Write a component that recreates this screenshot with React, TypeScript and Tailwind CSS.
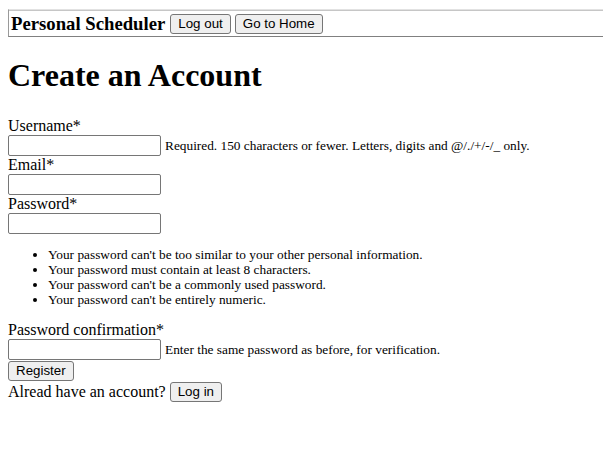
import React from 'react';

const btn =
  "font-['Liberation_Sans',Arial,sans-serif] text-[13.33px] leading-[16px] px-[7px] py-[1px] bg-[#efefef] border border-[#767676] rounded-[3px] text-black";

const input = 'block w-[153px] h-[21px] border border-[#767676] rounded-[2px] bg-white';

const rules = [
  "Your password can't be too similar to your other personal information.",
  'Your password must contain at least 8 characters.',
  "Your password can't be a commonly used password.",
  "Your password can't be entirely numeric.",
];

function Field({ label, type, help }: { label: string; type: string; help?: string }) {
  return (
    <div>
      <label className="block leading-[18px]">{label}</label>
      <div className="flex items-center gap-[4px]">
        <input type={type} className={input} />
        {help && <span className="text-[13.33px] leading-[15px]">{help}</span>}
      </div>
    </div>
  );
}

export default function App() {
  return (
    <div className="w-[603px] h-[465px] overflow-hidden bg-white text-black font-['Liberation_Serif','Times_New_Roman',serif] text-[16px] p-2">
      <div className="w-[620px] mt-[1px] border border-t-[#e2e2e2] border-l-[#9a9a9a] border-r-[#9a9a9a] border-b-[#808080]">
        <div className="flex items-center gap-[4px] h-[26px] px-[2px] border-t border-[#c6c6c6]">
          <strong className="text-[18.72px] leading-[22px] mr-[1px]">Personal Scheduler</strong>
          <button className={btn}>Log out</button>
          <button className={btn}>Go to Home</button>
        </div>
      </div>

      <h1 className="text-[32px] font-bold leading-[37px] mt-[20px] mb-[23px]">Create an Account</h1>

      <form className="flex flex-col">
        <Field label="Username*" type="text" help="Required. 150 characters or fewer. Letters, digits and @/./+/-/_ only." />
        <Field label="Email*" type="email" />
        <Field label="Password*" type="password" />
        <ul className="list-disc pl-[40px] mt-[13px] mb-[14px] text-[13.33px] leading-[15px]">
          {rules.map(r => (
            <li key={r}>{r}</li>
          ))}
        </ul>
        <Field label="Password confirmation*" type="password" help="Enter the same password as before, for verification." />
        <div className="flex mt-[1px]">
          <button type="button" className={btn}>Register</button>
        </div>
        <div className="flex items-center gap-[4px] mt-[1px]">
          <span className="leading-[18px]">Alread have an account?</span>
          <button type="button" className={btn}>Log in</button>
        </div>
      </form>
    </div>
  );
}
